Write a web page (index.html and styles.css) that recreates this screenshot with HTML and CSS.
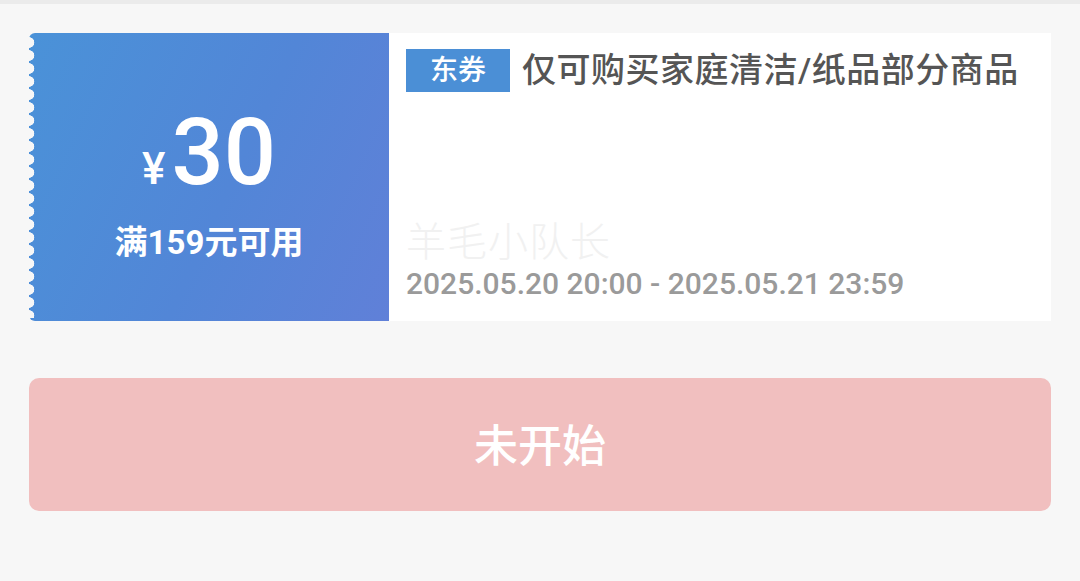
FILE: index.html
```html
<!DOCTYPE html>
<html lang="zh-CN">
<head>
    <meta charset="UTF-8">
    <meta name="viewport" content="width=device-width, initial-scale=1.0">
    <title>优惠券</title>
    <link rel="stylesheet" href="styles.css">
</head>
<body>
    <div class="top-line"></div>
    <div class="page">
        <!-- 券 -->
        <div class="coupon">
            <div class="coupon-left">
                <div class="amount"><span class="yen">¥</span><span class="num">30</span></div>
                <div class="limit">满159元可用</div>
            </div>
            <div class="coupon-right">
                <div class="title-row">
                    <span class="tag">东券</span>
                    <span class="title">仅可购买家庭清洁/纸品部分商品</span>
                </div>
                <div class="watermark">羊毛小队长</div>
                <div class="date">2025.05.20 20:00 - 2025.05.21 23:59</div>
            </div>
        </div>
        <button class="btn" disabled>未开始</button>
    </div>
</body>
</html>
```

FILE: styles.css
```css
body {
    margin: 0;
    background-color: #f7f7f7;
    font-family: Roboto, "Noto Sans CJK SC", sans-serif;
}
.top-line {
    height: 4px;
    background-color: #ebebeb;
}
.page {
    padding: 29px 29px 0 29px;
}
.coupon {
    display: flex;
    height: 288px;
}
.coupon-left {
    position: relative;
    width: 360px;
    flex-shrink: 0;
    background: linear-gradient(115deg, #4a92d8 0%, #5286d7 55%, #6080d8 100%);
    border-top-left-radius: 6px;
    border-bottom-left-radius: 6px;
    color: #fff;
    display: flex;
    flex-direction: column;
    align-items: center;
    padding-top: 74px;
    box-sizing: border-box;
}
/* 左侧锯齿 */
.coupon-left::before {
    content: "";
    position: absolute;
    left: 0;
    top: 3px;
    bottom: 3px;
    width: 7px;
    background: radial-gradient(circle at 0 50%, #f7f7f7 5px, transparent 5.6px);
    background-size: 7px 13px;
    background-repeat: repeat-y;
}
.amount {
    display: flex;
    align-items: baseline;
    line-height: 1;
}
.yen {
    font-size: 44px;
    font-weight: 500;
    margin-right: 6px;
}
.num {
    font-size: 92px;
    font-weight: 500;
}
.limit {
    margin-top: 27px;
    font-size: 33px;
    font-weight: 700;
    line-height: 1;
}
.coupon-right {
    flex: 1;
    background-color: #fff;
    padding: 16px 17px 0 17px;
    display: flex;
    flex-direction: column;
}
.title-row {
    display: flex;
    align-items: center;
}
.tag {
    background-color: #4b8fd6;
    color: #fff;
    font-size: 28px;
    font-weight: 500;
    height: 43px;
    line-height: 43px;
    width: 104px;
    text-align: center;
    margin-right: 12px;
}
.title {
    font-size: 34px;
    color: #555;
    font-weight: 500;
    letter-spacing: 0.5px;
    margin-top: -6px;
}
.watermark {
    margin-top: 128px;
    font-size: 40px;
    line-height: 46px;
    color: #f1f1f1;
    font-weight: 300;
    letter-spacing: 1px;
}
.date {
    margin-top: 0;
    font-size: 30px;
    font-weight: 500;
    color: #9a9a9a;
    line-height: 36px;
}
.btn {
    display: block;
    width: 100%;
    height: 133px;
    margin-top: 57px;
    padding-bottom: 4px;
    border: none;
    border-radius: 10px;
    background-color: #f1bfbf;
    color: #fff;
    font-family: "Noto Sans CJK SC", sans-serif;
    font-size: 44px;
    font-weight: 500;
}
```
